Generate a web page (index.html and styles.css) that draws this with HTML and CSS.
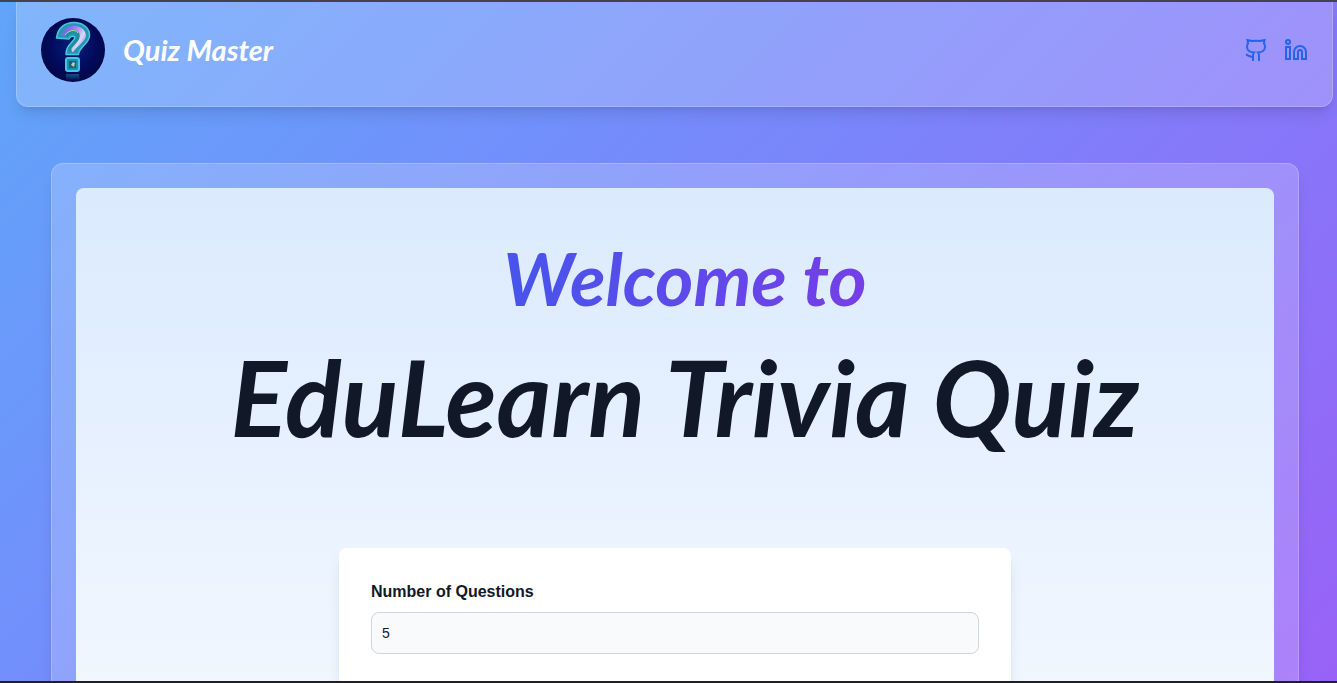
FILE: index.html
```html
<!DOCTYPE html>
<html lang="en">
<head>
<meta charset="utf-8">
<meta name="viewport" content="width=device-width, initial-scale=1">
<title>Quiz Master</title>
<link rel="stylesheet" href="styles.css">
</head>
<body>
<div class="page">
  <header class="header">
    <a class="brand" href="#">
      <svg class="logo" viewBox="0 0 64 64" aria-hidden="true">
        <defs>
          <radialGradient id="night" cx="50%" cy="45%" r="60%">
            <stop offset="0" stop-color="#04207c"/>
            <stop offset="0.6" stop-color="#020a5c"/>
            <stop offset="1" stop-color="#02063f"/>
          </radialGradient>
          <linearGradient id="sheen" x1="0" y1="0" x2="1" y2="0.6">
            <stop offset="0" stop-color="#1d8fae"/>
            <stop offset="0.3" stop-color="#8b6be8"/>
            <stop offset="0.55" stop-color="#b98af0"/>
            <stop offset="0.8" stop-color="#d5dcf6"/>
            <stop offset="1" stop-color="#b58ae6"/>
          </linearGradient>
          <linearGradient id="reflection" x1="0" y1="0" x2="0" y2="1">
            <stop offset="0" stop-color="#1a6c9c" stop-opacity="0.7"/>
            <stop offset="1" stop-color="#1a6c9c" stop-opacity="0"/>
          </linearGradient>
        </defs>
        <circle cx="32" cy="32" r="32" fill="url(#night)"/>
        <path d="M15.500 20C17 9 25 4 34 4.500C43 5 49 11 48.500 18C48 26 38 29 37.500 36.500H25C24.500 28 31 25 33.500 21C35 18 30 16.500 28 21Z" fill="#2497b8" stroke="#45c9da" stroke-width="1.500" stroke-linejoin="round"/>
        <path d="M20 17C22 10 28 7 34 8C41 8.500 45 13 45 18C44 24 36 28 32 34C28 33 30 27 35 23C40 17 34 12 28 14L24 18Z" fill="url(#sheen)"/>
        <path d="M25 18C28 13 34 12 37 16C39 21 33 24 29 30V34" fill="none" stroke="#1f8d9d" stroke-width="3"/>
        <path d="M24 17C28 12 34 11 37 15" fill="none" stroke="#b0dc7b" stroke-width="1"/>
        <rect x="25" y="40" width="13" height="13" rx="2" fill="#1c8eb8" stroke="#42c8d9" stroke-width="2"/>
        <rect x="28" y="43" width="7" height="7" fill="#176080"/>
        <path d="M30 47l2-3 2 1-1 4z" fill="#b7d2a0"/>
        <path d="M25 56h13l1 7H25z" fill="url(#reflection)"/>
      </svg>
      <span class="brand-name">Quiz Master</span>
    </a>
    <nav class="social" aria-label="Social links">
      <a href="#" aria-label="GitHub">
        <svg class="icon" viewBox="0 0 24 24"><path d="M15 23v-5a4.800 4.800 0 0 0-1-3.500c3 0 7-1.500 7-6 0-1.200-.4-2-1-3L20.500 2 16 3q-4-.7-8 0L3.500 2 4 5.500C3.400 6.500 3 7.300 3 8.500c0 4.500 4 6 7 6A4.800 4.800 0 0 0 9 18v5"/><path d="M9 18.500c-4 1-5-1.500-7-2"/></svg>
      </a>
      <a href="#" aria-label="LinkedIn">
        <svg class="icon" viewBox="0 0 24 24"><path d="M16 8a6 6 0 0 1 6 6v7h-4v-7a2 2 0 0 0-2-2 2 2 0 0 0-2 2v7h-4v-7a6 6 0 0 1 6-6z"/><rect x="2" y="9" width="4" height="12"/><circle cx="4" cy="4" r="2"/></svg>
      </a>
    </nav>
  </header>
  <main class="card">
    <div class="panel">
      <h1 class="title">
        <span class="welcome">Welcome to</span>
        <span class="name">EduLearn Trivia Quiz</span>
      </h1>
      <form class="form">
        <label class="label" for="amount">Number of Questions</label>
        <input class="field" id="amount" type="text" inputmode="numeric" value="5">
      </form>
    </div>
  </main>
</div>
</body>
</html>
```

FILE: styles.css
```css
* {
  box-sizing: border-box;
}

body {
  margin: 0;
  height: 100vh;
  overflow: hidden;
  border-top: 2px solid #434349;
  border-bottom: 2px solid #202024;
  font-family: "Liberation Sans", Arial, sans-serif;
  color: #111827;
}

.page {
  display: flex;
  flex-direction: column;
  gap: 56px;
  min-height: 100%;
  padding: 0 4px 0 16px;
  background: linear-gradient(135deg, #60a5fa, #7c83fb 50%, #9b5ff6);
}

.header {
  display: flex;
  align-items: center;
  justify-content: space-between;
  padding: 16px 24px 24px;
  border: 1px solid rgba(255, 255, 255, 0.2);
  border-top: 0;
  border-radius: 0 0 12px 12px;
  background: rgba(255, 255, 255, 0.2);
  box-shadow: 0 10px 15px -3px rgba(0, 0, 0, 0.1), 0 4px 6px -4px rgba(0, 0, 0, 0.1);
}

.brand {
  display: flex;
  align-items: center;
  gap: 18px;
  color: #fff;
  text-decoration: none;
}

.logo {
  width: 64px;
  height: 64px;
}

.brand-name {
  font: italic 700 29px/40px Lato, sans-serif;
}

.social {
  display: flex;
  gap: 16px;
  color: #2563eb;
}

.social a {
  display: flex;
  color: inherit;
}

.icon {
  width: 24px;
  height: 24px;
  fill: none;
  stroke: currentColor;
  stroke-width: 2;
}

.card {
  margin: 0 34px 0 35px;
  padding: 24px;
  border: 1px solid rgba(255, 255, 255, 0.2);
  border-radius: 12px;
  background: rgba(255, 255, 255, 0.2);
  box-shadow: 0 10px 15px -3px rgba(0, 0, 0, 0.1), 0 4px 6px -4px rgba(0, 0, 0, 0.1);
}

.panel {
  display: flex;
  flex-direction: column;
  align-items: center;
  gap: 64px;
  padding: 48px 32px;
  border-radius: 8px;
  background: linear-gradient(to bottom, #dbeafe, #f3f8ff);
}

.title {
  display: flex;
  flex-direction: column;
  align-items: center;
  margin: 0;
  padding-left: 20px;
  font-family: Lato, sans-serif;
  font-style: italic;
  font-weight: 700;
  text-align: center;
}

.welcome {
  padding: 0 8px;
  font-size: 73px;
  line-height: 84px;
  color: transparent;
  background: linear-gradient(to right, #4655eb, #763ee8);
  -webkit-background-clip: text;
  background-clip: text;
}

.name {
  font-size: 105px;
  line-height: 152px;
  padding-bottom: 12px;
}

.form {
  display: flex;
  flex-direction: column;
  gap: 8px;
  width: 100%;
  max-width: 672px;
  padding: 32px;
  border-radius: 8px;
  background: #fff;
  box-shadow: 0 10px 15px -3px rgba(0, 0, 0, 0.1), 0 4px 6px -4px rgba(0, 0, 0, 0.1);
}

.label {
  font-size: 16px;
  font-weight: 700;
  line-height: 24px;
}

.field {
  width: 100%;
  height: 42px;
  padding: 10px;
  border: 1px solid #d1d5db;
  border-radius: 8px;
  background: #f9fafb;
  font: 14px/20px "Liberation Sans", Arial, sans-serif;
  color: #111827;
}
```
